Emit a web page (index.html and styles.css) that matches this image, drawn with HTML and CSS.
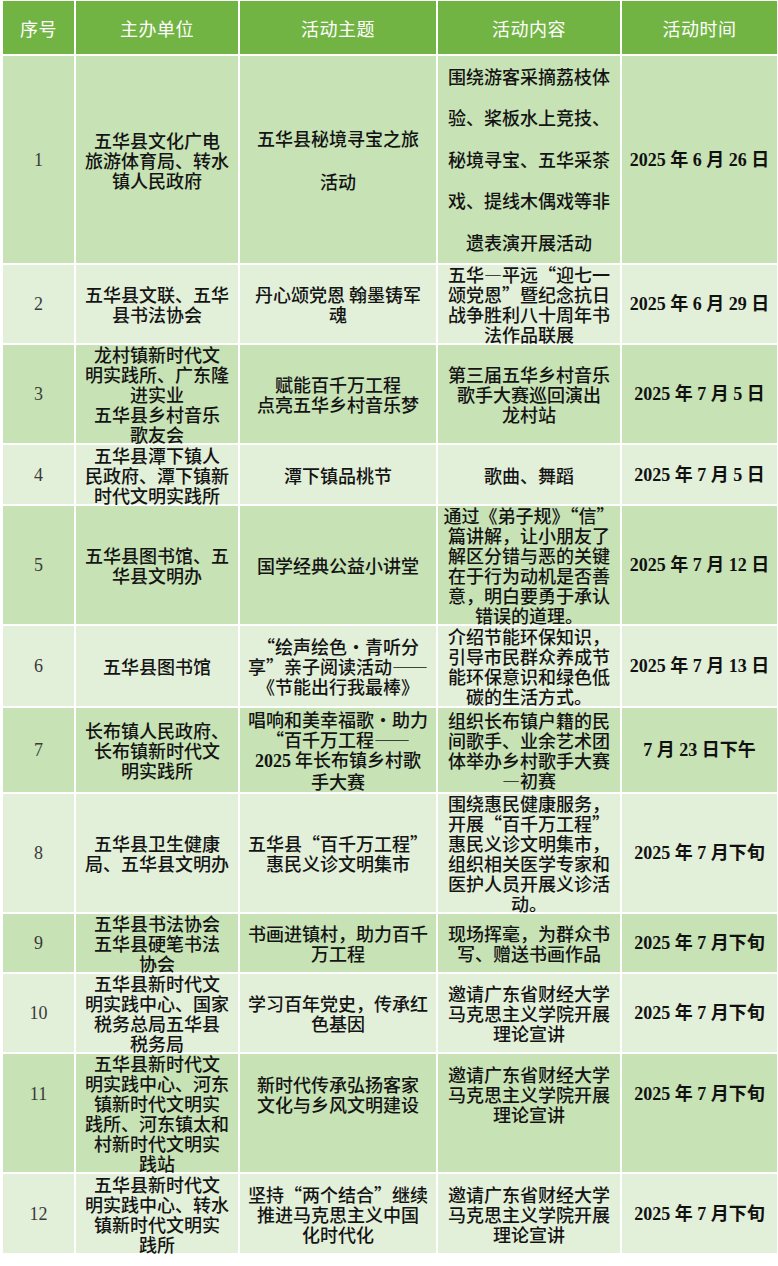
FILE: index.html
```html
<!DOCTYPE html>
<html lang="zh-CN">
<head>
<meta charset="utf-8">
<title>活动安排表</title>
<link rel="stylesheet" href="styles.css">
</head>
<body>
<table class="sched">
  <colgroup>
    <col class="c-no">
    <col class="c-org">
    <col class="c-theme">
    <col class="c-content">
    <col class="c-time">
  </colgroup>
  <thead>
    <tr class="h-head">
      <th>序号</th><th>主办单位</th><th>活动主题</th><th>活动内容</th><th>活动时间</th>
    </tr>
  </thead>
  <tbody>
    <tr class="odd h-r1">
      <td class="no"><div class="in">1</div></td>
      <td><div class="in">五华县文化广电<br>旅游体育局、转水<br>镇人民政府</div></td>
      <td class="loose"><div class="in">五华县秘境寻宝之旅<br>活动</div></td>
      <td class="loose2"><div class="in">围绕游客采摘荔枝体<br>验、桨板水上竞技、<br>秘境寻宝、五华采茶<br>戏、提线木偶戏等非<br>遗表演开展活动</div></td>
      <td class="time"><div class="in">2025 年 6 月 26 日</div></td>
    </tr>
    <tr class="even h-r2">
      <td class="no"><div class="in">2</div></td>
      <td><div class="in">五华县文联、五华<br>县书法协会</div></td>
      <td><div class="in">丹心颂党恩&nbsp;翰墨铸军<br>魂</div></td>
      <td><div class="in">五华—平远“迎七一<br>颂党恩”暨纪念抗日<br>战争胜利八十周年书<br>法作品联展</div></td>
      <td class="time"><div class="in">2025 年 6 月 29 日</div></td>
    </tr>
    <tr class="odd h-r3">
      <td class="no"><div class="in">3</div></td>
      <td><div class="in">龙村镇新时代文<br>明实践所、广东隆<br>进实业<br>五华县乡村音乐<br>歌友会</div></td>
      <td><div class="in">赋能百千万工程<br>点亮五华乡村音乐梦</div></td>
      <td><div class="in">第三届五华乡村音乐<br>歌手大赛巡回演出<br>龙村站</div></td>
      <td class="time"><div class="in">2025 年 7 月 5 日</div></td>
    </tr>
    <tr class="even h-r4">
      <td class="no"><div class="in">4</div></td>
      <td><div class="in">五华县潭下镇人<br>民政府、潭下镇新<br>时代文明实践所</div></td>
      <td><div class="in">潭下镇品桃节</div></td>
      <td><div class="in">歌曲、舞蹈</div></td>
      <td class="time"><div class="in">2025 年 7 月 5 日</div></td>
    </tr>
    <tr class="odd h-r5">
      <td class="no"><div class="in">5</div></td>
      <td><div class="in">五华县图书馆、五<br>华县文明办</div></td>
      <td><div class="in">国学经典公益小讲堂</div></td>
      <td><div class="in">通过《弟子规》“信”<br>篇讲解，让小朋友了<br>解区分错与恶的关键<br>在于行为动机是否善<br>意，明白要勇于承认<br>错误的道理。</div></td>
      <td class="time"><div class="in">2025 年 7 月 12 日</div></td>
    </tr>
    <tr class="even h-r6">
      <td class="no"><div class="in">6</div></td>
      <td><div class="in">五华县图书馆</div></td>
      <td><div class="in">“绘声绘色・青听分<br>享”亲子阅读活动——<br>《节能出行我最棒》</div></td>
      <td><div class="in">介绍节能环保知识，<br>引导市民群众养成节<br>能环保意识和绿色低<br>碳的生活方式。</div></td>
      <td class="time"><div class="in">2025 年 7 月 13 日</div></td>
    </tr>
    <tr class="odd h-r7">
      <td class="no"><div class="in">7</div></td>
      <td><div class="in">长布镇人民政府、<br>长布镇新时代文<br>明实践所</div></td>
      <td><div class="in">唱响和美幸福歌・助力<br>“百千万工程——<br><span class="num">2025</span> 年长布镇乡村歌<br>手大赛</div></td>
      <td><div class="in">组织长布镇户籍的民<br>间歌手、业余艺术团<br>体举办乡村歌手大赛<br>—初赛</div></td>
      <td class="time"><div class="in">7 月 23 日下午</div></td>
    </tr>
    <tr class="even h-r8">
      <td class="no"><div class="in">8</div></td>
      <td><div class="in">五华县卫生健康<br>局、五华县文明办</div></td>
      <td><div class="in">五华县“百千万工程”<br>惠民义诊文明集市</div></td>
      <td><div class="in">围绕惠民健康服务，<br>开展“百千万工程”<br>惠民义诊文明集市，<br>组织相关医学专家和<br>医护人员开展义诊活<br>动。</div></td>
      <td class="time"><div class="in">2025 年 7 月下旬</div></td>
    </tr>
    <tr class="odd h-r9">
      <td class="no"><div class="in">9</div></td>
      <td><div class="in">五华县书法协会<br>五华县硬笔书法<br>协会</div></td>
      <td><div class="in">书画进镇村，助力百千<br>万工程</div></td>
      <td><div class="in">现场挥毫，为群众书<br>写、赠送书画作品</div></td>
      <td class="time"><div class="in">2025 年 7 月下旬</div></td>
    </tr>
    <tr class="even h-r10">
      <td class="no"><div class="in">10</div></td>
      <td><div class="in">五华县新时代文<br>明实践中心、国家<br>税务总局五华县<br>税务局</div></td>
      <td><div class="in">学习百年党史，传承红<br>色基因</div></td>
      <td><div class="in">邀请广东省财经大学<br>马克思主义学院开展<br>理论宣讲</div></td>
      <td class="time"><div class="in">2025 年 7 月下旬</div></td>
    </tr>
    <tr class="odd h-r11">
      <td class="no raised"><div class="in">11</div></td>
      <td><div class="in">五华县新时代文<br>明实践中心、河东<br>镇新时代文明实<br>践所、河东镇太和<br>村新时代文明实<br>践站</div></td>
      <td class="raised"><div class="in">新时代传承弘扬客家<br>文化与乡风文明建设</div></td>
      <td class="raised"><div class="in">邀请广东省财经大学<br>马克思主义学院开展<br>理论宣讲</div></td>
      <td class="time raised"><div class="in">2025 年 7 月下旬</div></td>
    </tr>
    <tr class="even h-r12">
      <td class="no"><div class="in">12</div></td>
      <td><div class="in">五华县新时代文<br>明实践中心、转水<br>镇新时代文明实<br>践所</div></td>
      <td><div class="in">坚持“两个结合”继续<br>推进马克思主义中国<br>化时代化</div></td>
      <td><div class="in">邀请广东省财经大学<br>马克思主义学院开展<br>理论宣讲</div></td>
      <td class="time"><div class="in">2025 年 7 月下旬</div></td>
    </tr>
  </tbody>
</table>
</body>
</html>
```

FILE: styles.css
```css
html, body {
  margin: 0;
  padding: 0;
  background: #ffffff;
}

.sched {
  border-collapse: collapse;
  table-layout: fixed;
  width: 776px;
  margin: -1px 0 0 1px;
  font-family: "Noto Sans CJK SC", "Liberation Serif", sans-serif;
  font-size: 18px;
  line-height: 20px;
  font-weight: 500;
  color: #141414;
}

.c-no { width: 73px; }
.c-org { width: 164px; }
.c-theme { width: 198px; }
.c-content { width: 184px; }
.c-time { width: 157px; }

.sched th,
.sched td {
  border: 2px solid #ffffff;
  padding: 0;
  text-align: center;
  vertical-align: middle;
  white-space: nowrap;
  overflow: visible;
}

.sched .in {
  margin: -6px 0;
}

.sched th {
  background: #72b443;
  color: #ffffff;
  font-weight: 400;
  font-size: 18px;
  letter-spacing: 0.5px;
}

.odd td { background: #c7e2b4; }
.even td { background: #e2efd9; }

.sched td.no {
  font-family: "Liberation Serif", serif;
  font-weight: 400;
  font-size: 18px;
  color: #3a3a3a;
}

.sched td.time {
  font-family: "Liberation Serif", "Noto Sans CJK SC", serif;
  font-weight: 700;
  font-size: 18px;
  color: #111111;
}

.num {
  font-family: "Liberation Serif", serif;
  font-weight: 700;
}

.loose { line-height: 43px; }
.loose2 { line-height: 41.5px; }

.sched td.raised { padding-bottom: 38px; }

.h-head { height: 55px; }
.h-r1 { height: 209px; }
.h-r2 { height: 80px; }
.h-r3 { height: 100px; }
.h-r4 { height: 61px; }
.h-r5 { height: 120px; }
.h-r6 { height: 82px; }
.h-r7 { height: 86px; }
.h-r8 { height: 120px; }
.h-r9 { height: 60px; }
.h-r10 { height: 80px; }
.h-r11 { height: 120px; }
.h-r12 { height: 81px; }
```
